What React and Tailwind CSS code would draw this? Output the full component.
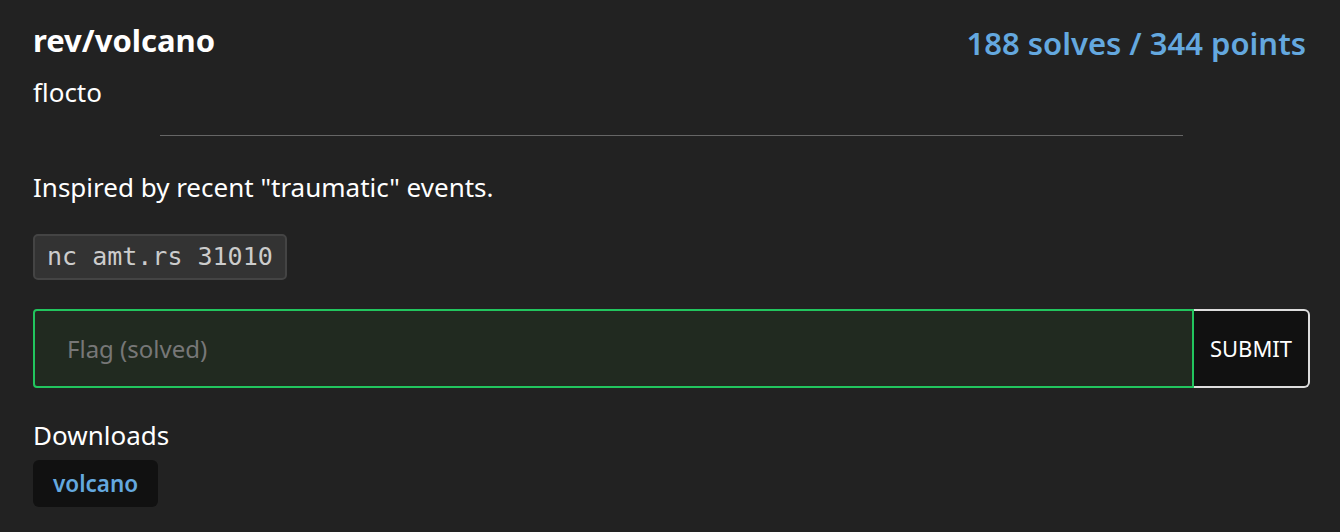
export default function App() {
    return (
        <div
            className="min-h-[532px] bg-[#222222] text-white pl-[33px] pr-[30px] pt-[18px]"
            style={{ fontFamily: '"Noto Sans", "Open Sans", sans-serif' }}
        >
            <div className="flex items-start justify-between pr-[4px]">
                <div>
                    <h1 className="text-[31px] font-bold leading-[44px]">rev/volcano</h1>
                    <p className="text-[26px] leading-[36px] mt-[12px]">flocto</p>
                </div>
                <div className="text-[31px] font-semibold leading-[50px] text-[#64a8df]">
                    188 solves / 344 points
                </div>
            </div>

            <hr className="mx-auto w-[1023px] border-0 border-t border-[#666666] mt-[25px]" />

            <p className="text-[26px] leading-[36px] mt-[33px]">Inspired by recent "traumatic" events.</p>

            <div className="mt-[29px]">
                <code
                    className="inline-block rounded-[5px] border-2 border-[#444444] bg-[#333333] px-[12px] py-[6px] text-[25px] leading-[30px] text-[#cccccc]"
                    style={{ fontFamily: '"DejaVu Sans Mono", "Liberation Mono", monospace' }}
                >
                    nc amt.rs 31010
                </code>
            </div>

            <form className="flex mt-[29px] h-[79px]" onSubmit={(e) => e.preventDefault()}>
                <input
                    type="text"
                    placeholder="Flag (solved)"
                    className="flex-1 rounded-l-[4px] border-2 border-[#22c55e] bg-[#212a20] px-[32px] text-[24px] text-white placeholder-[#777777] outline-none"
                />
                <button
                    type="submit"
                    className="w-[116px] rounded-r-[6px] border-2 border-l-0 border-[#dddddd] bg-[#111111] text-[22px] text-white"
                >
                    SUBMIT
                </button>
            </form>

            <div className="mt-[30px]">
                <h3 className="text-[26px] leading-[34px]">Downloads</h3>
                <a className="mt-[8px] inline-block rounded-[6px] bg-[#111111] px-[20px] py-[8px] text-[22.5px] font-semibold leading-[31px] text-[#64a8df]">
                    volcano
                </a>
            </div>
        </div>
    );
}
